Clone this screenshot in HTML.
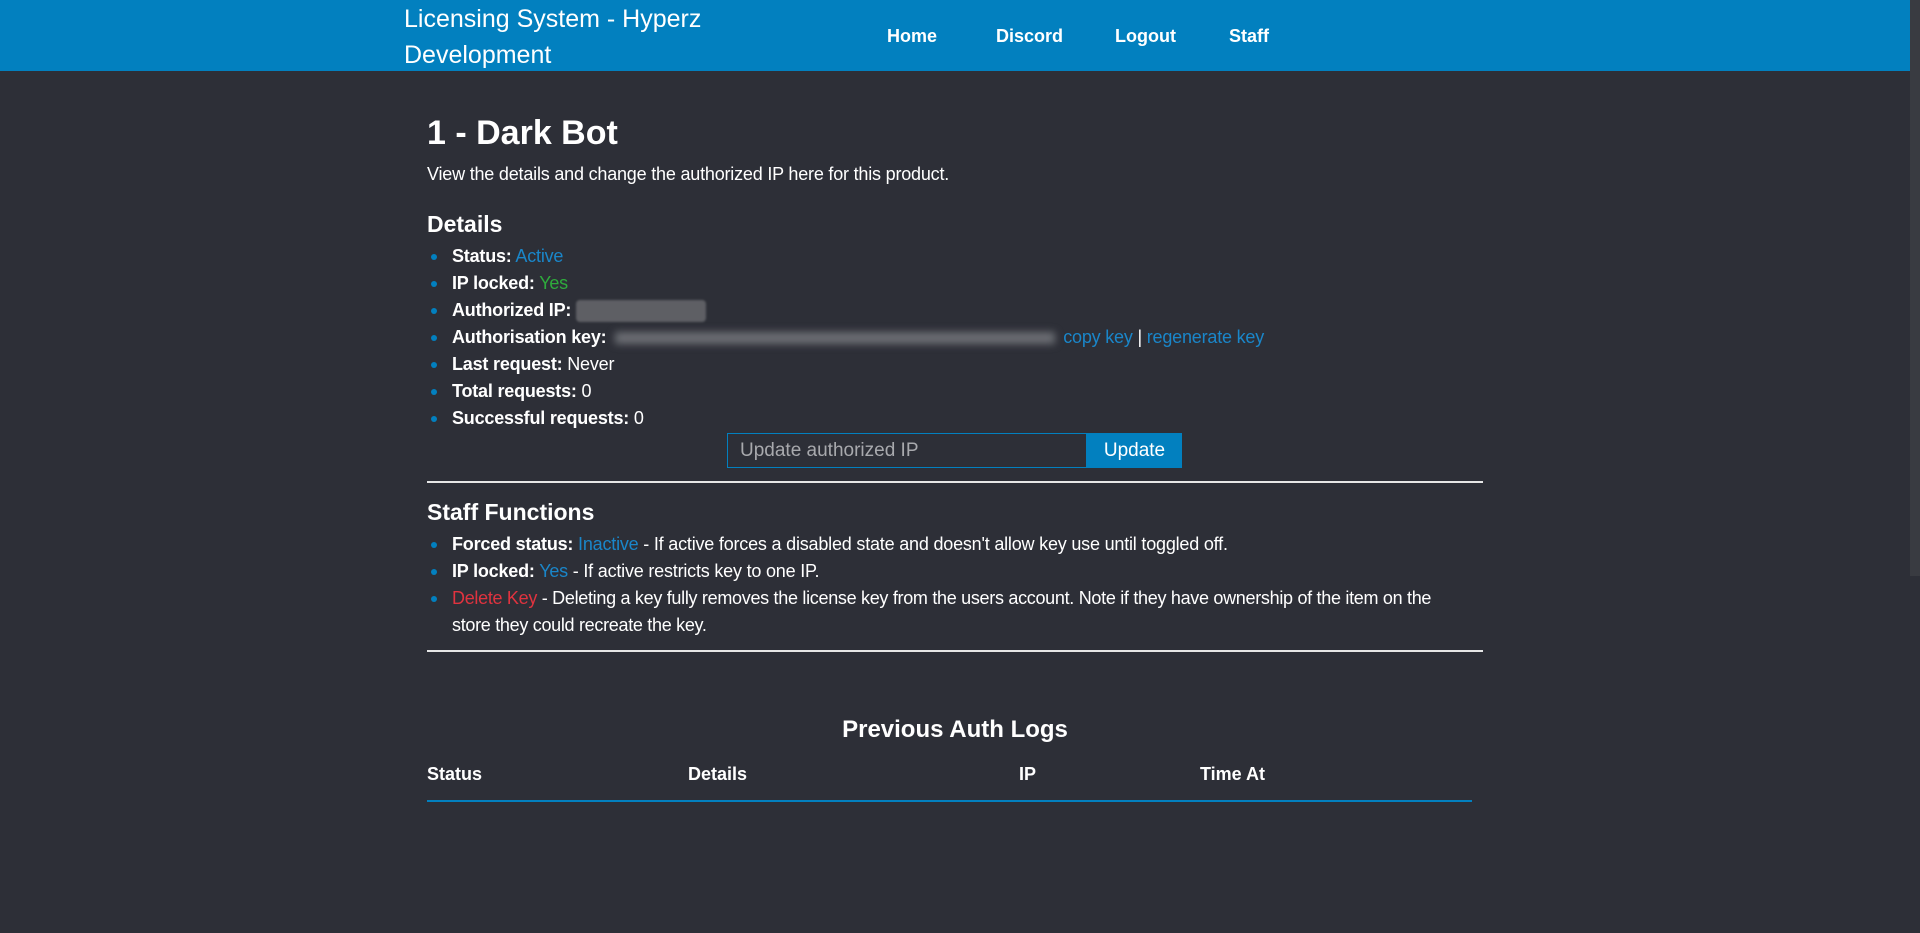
<!DOCTYPE html>
<html><head><meta charset="utf-8"><style>
*{margin:0;padding:0;box-sizing:border-box}
html,body{width:1920px;height:933px;overflow:hidden;background:#2d2f37;color:#fff;font-family:"Liberation Sans Narrow","Liberation Sans",sans-serif}
.hdr{position:absolute;left:0;top:0;width:1910px;height:71px;background:#0280bf}
.brand{position:absolute;left:404px;top:1px;font-size:25px;line-height:36px;width:340px}
.nav a{position:absolute;top:26px;font-size:18px;font-weight:bold;color:#fff;text-decoration:none}
.sb{position:absolute;left:1910px;top:0;width:10px;height:576px;background:#393b41}
.c{position:absolute;left:427px;width:1056px}
h1{font-size:34px;font-weight:bold}
h3{font-size:23px;font-weight:bold}
ul{list-style:none}
li{position:relative;padding-left:25px;font-size:18px;line-height:27px;letter-spacing:-0.2px}
li:before{content:"";position:absolute;left:4px;top:11px;width:6px;height:6px;border-radius:50%;background:#0280bf}
b{font-weight:bold}
.bl{color:#1a86c9}.gr{color:#2eab3c}.rd{color:#e0333f}
hr{position:absolute;left:427px;width:1056px;border:0;border-top:2px solid #e6e6e6}
</style></head><body>
<div class="hdr">
<div class="brand">Licensing System - Hyperz Development</div>
<div class="nav"><a style="left:887px">Home</a><a style="left:996px">Discord</a><a style="left:1115px">Logout</a><a style="left:1229px">Staff</a></div>
</div>
<div class="sb"></div>
<div class="c" style="top:114px"><h1>1 - Dark Bot</h1></div>
<div class="c" style="top:164px;font-size:18px;letter-spacing:-0.2px">View the details and change the authorized IP here for this product.</div>
<div class="c" style="top:211px"><h3>Details</h3></div>
<ul class="c" style="top:243px">
<li><b>Status:</b> <span class="bl">Active</span></li>
<li><b>IP locked:</b> <span class="gr">Yes</span></li>
<li><b>Authorized IP:</b> <span style="display:inline-block;width:130px;height:22px;background:#5e5f64;border-radius:4px;vertical-align:middle;filter:blur(1px)"></span></li>
<li><b>Authorisation key:</b> <span style="display:inline-block;width:440px;height:12px;background:#6c6e74;vertical-align:middle;filter:blur(4px);margin:0 8px 0 4px"></span><span class="bl">copy key</span> | <span class="bl">regenerate key</span></li>
<li><b>Last request:</b> Never</li>
<li><b>Total requests:</b> 0</li>
<li><b>Successful requests:</b> 0</li>
</ul>
<div style="position:absolute;left:727px;top:433px;width:360px;height:35px;border:1px solid #0280bf;background:#2d2f37;color:#a8a9ad;font-size:19px;padding:6px 12px">Update authorized IP</div>
<div style="position:absolute;left:1087px;top:433px;width:95px;height:35px;background:#0280bf;font-size:19px;text-align:center;line-height:35px">Update</div>
<hr style="top:481px">
<div class="c" style="top:499px"><h3>Staff Functions</h3></div>
<ul class="c" style="top:531px">
<li><b>Forced status:</b> <span class="bl">Inactive</span> - If active forces a disabled state and doesn't allow key use until toggled off.</li>
<li><b>IP locked:</b> <span class="bl">Yes</span> - If active restricts key to one IP.</li>
<li style="padding-right:50px;letter-spacing:-0.3px"><span class="rd">Delete Key</span> - Deleting a key fully removes the license key from the users account. Note if they have ownership of the item on the store they could recreate the key.</li>
</ul>
<hr style="top:650px">
<div style="position:absolute;left:427px;width:1056px;top:716px;text-align:center;font-size:24px;font-weight:bold">Previous Auth Logs</div>
<div style="position:absolute;top:764px;font-size:18px;font-weight:bold;left:427px">Status</div>
<div style="position:absolute;top:764px;font-size:18px;font-weight:bold;left:688px">Details</div>
<div style="position:absolute;top:764px;font-size:18px;font-weight:bold;left:1019px">IP</div>
<div style="position:absolute;top:764px;font-size:18px;font-weight:bold;left:1200px">Time At</div>
<div style="position:absolute;left:427px;top:800px;width:1045px;height:2px;background:#0280bf"></div>
</body></html>
